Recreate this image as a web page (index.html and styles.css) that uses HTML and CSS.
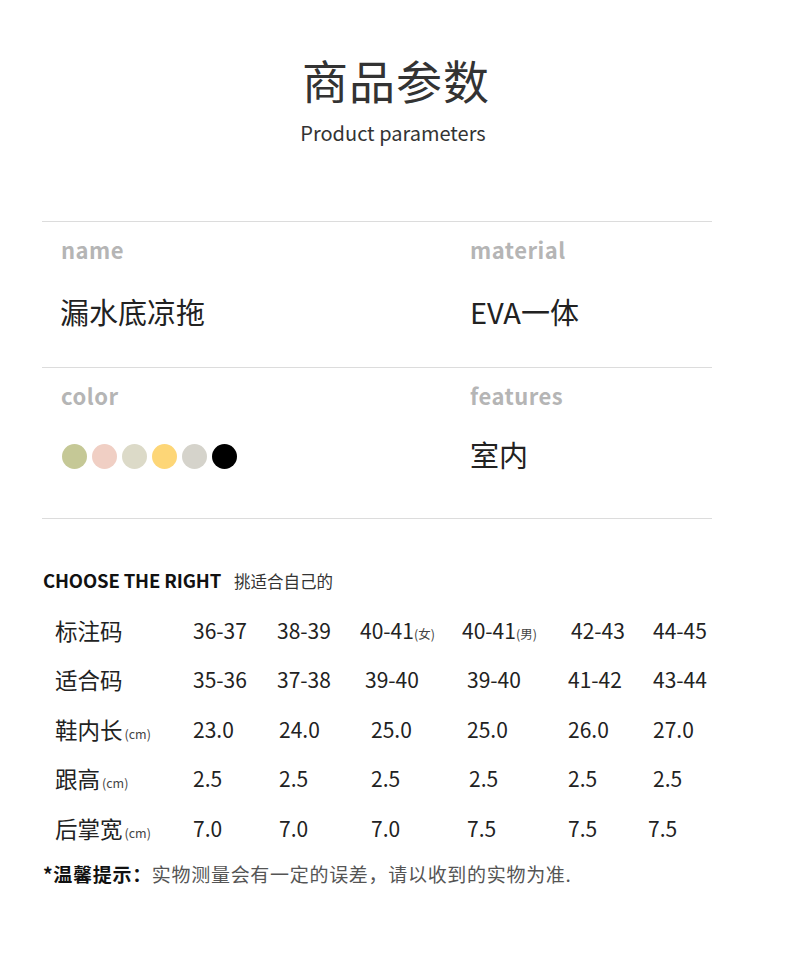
FILE: index.html
```html
<!DOCTYPE html>
<html lang="zh">
<head>
<meta charset="utf-8">
<link rel="stylesheet" href="styles.css">
</head>
<body>
<div class="page">
  <header class="head">
    <h1 class="title">商品参数</h1>
    <p class="subtitle">Product parameters</p>
  </header>

  <section class="params">
    <div class="row">
      <div class="cell">
        <div class="key">name</div>
        <div class="val">漏水底凉拖</div>
      </div>
      <div class="cell">
        <div class="key">material</div>
        <div class="val">EVA一体</div>
      </div>
    </div>
    <div class="row row2">
      <div class="cell">
        <div class="key">color</div>
        <div class="dots">
          <span class="dot c1"></span>
          <span class="dot c2"></span>
          <span class="dot c3"></span>
          <span class="dot c4"></span>
          <span class="dot c5"></span>
          <span class="dot c6"></span>
        </div>
      </div>
      <div class="cell">
        <div class="key">features</div>
        <div class="val">室内</div>
      </div>
    </div>
  </section>

  <section class="sizes">
    <h2 class="choose">CHOOSE THE RIGHT <span class="choose-cn">挑适合自己的</span></h2>
    <div class="table">
      <div class="tr">
        <div class="th">标注码</div>
        <div class="td">36-37</div>
        <div class="td">38-39</div>
        <div class="td shift-l">40-41<small>(女)</small></div>
        <div class="td shift-l">40-41<small>(男)</small></div>
        <div class="td shift-r">42-43</div>
        <div class="td">44-45</div>
      </div>
      <div class="tr">
        <div class="th">适合码</div>
        <div class="td">35-36</div>
        <div class="td">37-38</div>
        <div class="td">39-40</div>
        <div class="td">39-40</div>
        <div class="td">41-42</div>
        <div class="td">43-44</div>
      </div>
      <div class="tr">
        <div class="th">鞋内长<small>(cm)</small></div>
        <div class="td">23.0</div>
        <div class="td nudge">24.0</div>
        <div class="td nudge2">25.0</div>
        <div class="td">25.0</div>
        <div class="td">26.0</div>
        <div class="td">27.0</div>
      </div>
      <div class="tr">
        <div class="th">跟高<small>(cm)</small></div>
        <div class="td">2.5</div>
        <div class="td nudge">2.5</div>
        <div class="td nudge2">2.5</div>
        <div class="td nudge">2.5</div>
        <div class="td">2.5</div>
        <div class="td">2.5</div>
      </div>
      <div class="tr">
        <div class="th">后掌宽<small>(cm)</small></div>
        <div class="td">7.0</div>
        <div class="td nudge">7.0</div>
        <div class="td nudge2">7.0</div>
        <div class="td">7.5</div>
        <div class="td">7.5</div>
        <div class="td shift-l">7.5</div>
      </div>
    </div>
    <p class="note"><b>*温馨提示：</b>实物测量会有一定的误差，请以收到的实物为准.</p>
  </section>
</div>
</body>
</html>
```

FILE: styles.css
```css
* { box-sizing: border-box; margin: 0; padding: 0; }
body {
  background: #fff;
  font-family: "Noto Sans CJK SC", "Noto Sans", sans-serif;
  color: #222;
}
.page { width: 790px; height: 980px; }

.head { text-align: center; padding-top: 46px; padding-left: 2px; }
.title {
  font-size: 46px;
  font-weight: 400;
  color: #333;
  line-height: 66px;
  letter-spacing: 1px;
}
.subtitle {
  font-size: 20px;
  color: #333;
  line-height: 30px;
  margin-top: 6px;
  padding-right: 6px;
}

.params {
  margin: 73px 0 0 42px;
  width: 670px;
  border-top: 1px solid #dcdcdc;
}
.row {
  display: grid;
  grid-template-columns: 428px 242px;
  border-bottom: 1px solid #dcdcdc;
  height: 146px;
}
.row2 { height: 151px; }
.cell { padding-top: 12px; }
.cell:first-child { padding-left: 19px; }
.key {
  font-size: 22px;
  font-weight: 700;
  color: #b5b5b5;
  line-height: 30px;
  letter-spacing: 0.5px;
}
.val {
  font-size: 29px;
  color: #222;
  line-height: 40px;
  margin-top: 27px;
}
.cell:first-child .val { margin-left: -1px; }
.row2 .val { margin-top: 24px; }
.dots { display: flex; gap: 5px; margin-top: 34px; padding-left: 1px; }
.dot { width: 25px; height: 25px; border-radius: 50%; display: block; }
.c1 { background: #c5c896; }
.c2 { background: #f0cfc4; }
.c3 { background: #dcdac8; }
.c4 { background: #fdd677; }
.c5 { background: #d5d3cb; }
.c6 { background: #000; }

.sizes { padding-left: 43px; margin-top: 44px; }
.choose {
  font-size: 18.5px;
  font-weight: 700;
  color: #111;
  line-height: 34px;
  letter-spacing: -0.15px;
}
.choose-cn {
  font-size: 16.5px;
  font-weight: 400;
  color: #333;
  margin-left: 9px;
  letter-spacing: 0;
}
.table { margin-top: 7px; padding-left: 12px; }
.tr {
  display: grid;
  grid-template-columns: 138px 84px 88px 102px 101px 85px 80px;
  height: 49.5px;
  align-items: center;
  font-size: 21px;
  color: #222;
}
.th { font-size: 22.5px; }
.th small, .td small { font-size: 12.5px; color: #444; margin-left: 2px; }
.td small { margin-left: 0; }
.shift-l { margin-left: -5px; }
.shift-r { margin-left: 3px; }
.nudge { margin-left: 2px; }
.nudge2 { margin-left: 6px; }

.note {
  margin-top: 6px;
  font-size: 19px;
  color: #555;
  line-height: 30px;
  letter-spacing: 0.7px;
}
.note b { color: #111; font-weight: 700; }
```
